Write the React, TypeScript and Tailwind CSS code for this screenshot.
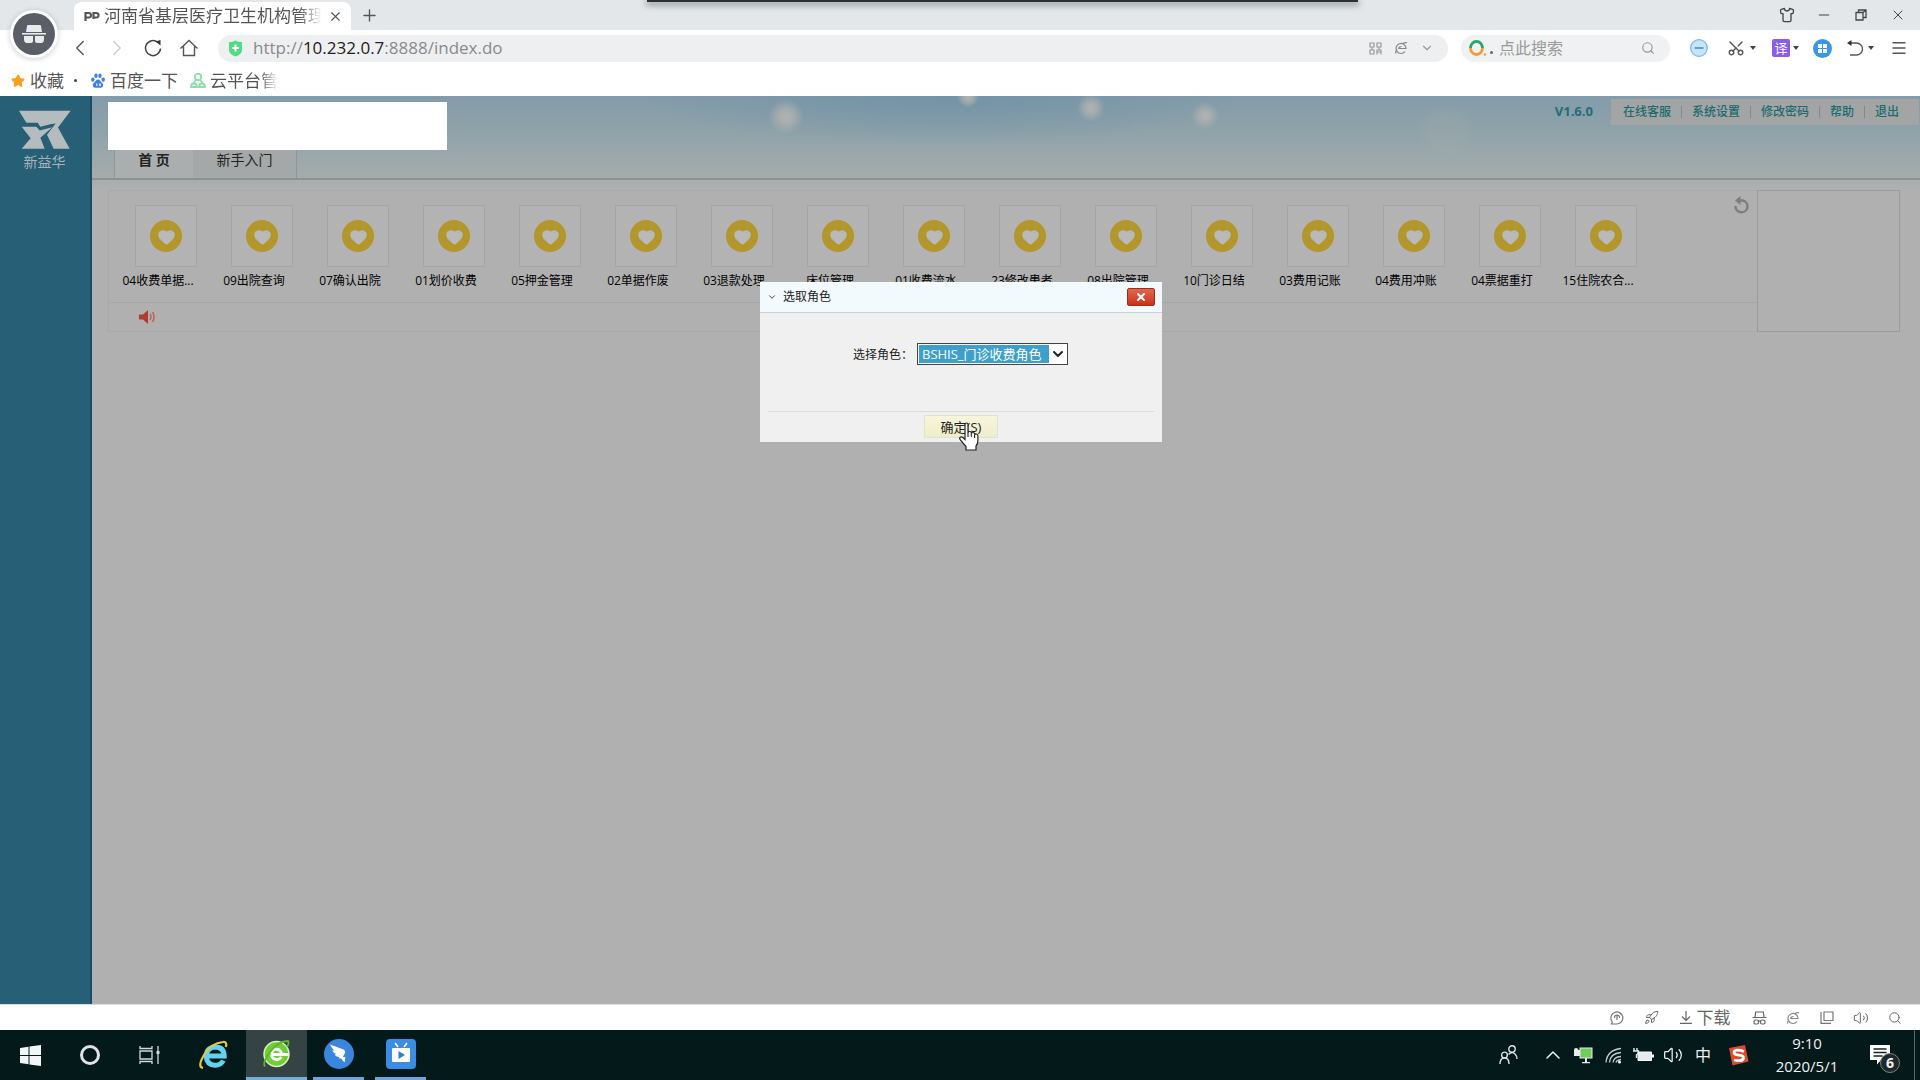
import React from 'react';
import {
  ChevronDown,
  ChevronLeft,
  ChevronRight,
  ChevronUp,
  Heart,
  Menu,
  Minus,
  Plus,
  Rocket,
  Scissors,
  Search,
  Shirt,
  Star,
  Volume2,
  X,
} from 'lucide-react';

const shortcuts = [
  '04收费单据...',
  '09出院查询',
  '07确认出院',
  '01划价收费',
  '05押金管理',
  '02单据作废',
  '03退款处理',
  '床位管理',
  '01收费流水',
  '23修改患者',
  '08出院管理',
  '10门诊日结',
  '03费用记账',
  '04费用冲账',
  '04票据重打',
  '15住院农合...',
];

const menuLinks = ['在线客服', '系统设置', '修改密码', '帮助', '退出'];

const Caret = () => (
  <svg className="w-[6px] h-[4px]" viewBox="0 0 6 4">
    <path d="M0 0h6L3 4z" fill="#444" />
  </svg>
);

const Incognito = ({ className }: { className?: string }) => (
  <svg className={className} viewBox="0 0 24 20" fill="currentColor">
    <path d="M6 1h12q1 0 1 1l1 6H4l1-6q0-1 1-1z" />
    <path d="M0 9h24v1.6H0z" />
    <path d="M2 12h9v5q0 2-2 2H5q-3 0-3-4zM13 12h9v3q0 4-3 4h-4q-2 0-2-2z" />
  </svg>
);

const IncognitoLine = () => (
  <svg className="w-[15px] h-[14px]" viewBox="0 0 15 14" fill="none" stroke="#666" strokeWidth="1.2">
    <path d="M3 6l.7-5h7.6l.7 5M0.5 6.5h14" />
    <rect x="2" y="9" width="4.5" height="4" rx="1.5" />
    <rect x="8.5" y="9" width="4.5" height="4" rx="1.5" />
    <path d="M6.5 10h2" />
  </svg>
);

const Paw = () => (
  <svg className="w-[14px] h-[15px]" viewBox="0 0 14 15" fill="#3d7ff0">
    <ellipse cx="1.8" cy="6.6" rx="1.7" ry="2.2" />
    <ellipse cx="5" cy="2.7" rx="1.7" ry="2.3" />
    <ellipse cx="9" cy="2.7" rx="1.7" ry="2.3" />
    <ellipse cx="12.2" cy="6.6" rx="1.7" ry="2.2" />
    <path d="M7 6.5c2 0 2.5 2 4 3.3 2.2 2 1 5-1.2 5H4.2c-2.3 0-3.4-3-1.2-5C4.5 8.5 5 6.5 7 6.5z" />
    <path d="M5 10.5h1.5V13H5zM8 10.5h2V13H8z" fill="#cfe0ff" />
  </svg>
);

const CloudNodes = () => (
  <svg className="w-[16px] h-[15px]" viewBox="0 0 16 15" fill="none" stroke="#8be0aa" strokeWidth="1.8">
    <circle cx="8" cy="4" r="3.2" />
    <path d="M6 7L3.5 10M10 7l2.5 3" />
    <path d="M1 14q0-3.5 3-3.500T7 14zM9 14q0-3.500 3-3.500t3 3.500z" />
  </svg>
);

const Shield = () => (
  <svg className="w-[15px] h-[17px]" viewBox="0 0 15 17">
    <path d="M1 2Q5 2.200 7.500.5 10 2.200 14 2v8q0 4-6.500 6.500Q1 14 1 10z" fill="#4fdc85" />
    <path d="M7.5 4.500v7M4 8h7" stroke="#fff" strokeWidth="2" />
  </svg>
);

const Reload = () => (
  <svg className="w-[18px] h-[18px]" viewBox="0 0 18 18" fill="none" stroke="#444" strokeWidth="1.5">
    <path d="M16.500 9.500A7.500 7.500 0 1 1 14 3.500" />
    <path d="M11.500 2.500l5-1.500v5.500z" fill="#333" stroke="none" />
  </svg>
);

const HomeIcon = () => (
  <svg className="w-[18px] h-[18px]" viewBox="0 0 18 18" fill="none" stroke="#555" strokeWidth="1.4">
    <path d="M.5 9.500L9 1.500l8.500 8M3.500 7.500v9h11v-9" />
  </svg>
);

const Undo = () => (
  <svg className="w-[16px] h-[18px]" viewBox="0 0 16 18" fill="none" stroke="#555" strokeWidth="1.3">
    <path d="M3 4h6.500a6 6 0 0 1 0 12H3" />
    <path d="M0 4l4.500-3v6z" fill="#333" stroke="none" />
  </svg>
);

const QrIcon = () => (
  <svg className="w-[13px] h-[13px]" viewBox="0 0 13 13" fill="none" stroke="#999" strokeWidth="1.2">
    <path d="M1 1h4v4H1zM8 1h4v4H8zM1 8h4v4H1zM8 12.500V8h4v4.500M8 10h4M3 5v3M10 5v3" />
  </svg>
);

const BrowserE = () => (
  <svg className="w-[14px] h-[14px]" viewBox="0 0 14 14" fill="none" stroke="#888" strokeWidth="1.2">
    <path d="M4.500 7.500h7.500A5 5 0 1 0 11 10.500" />
    <path d="M4.500 7.500q.5-2 3-2M2 12.500q-1-1.500 1-4M9 2.500q3-1.500 4-.5" />
  </svg>
);

const CompanyLogo = () => (
  <svg className="w-[52px] h-[39px]" viewBox="0 0 156 116" fill="#b5bcc0">
    <path d="M0 2h155l-38 50 35 64h-48L84 74l26-34-16 2-30 8-8-12H22z" />
    <path d="M8 50h44l10 11 38-10-36 32 13 33H8l27-32z" />
  </svg>
);

const Refresh = () => (
  <svg className="w-[18px] h-[18px]" viewBox="0 0 18 18" fill="none" stroke="#7d7d7d" strokeWidth="2.4">
    <path d="M7 4.500h3a6 6 0 1 1-7.500 5.500" />
    <path d="M7.500 0v9L2 4.500z" fill="#7d7d7d" stroke="none" />
  </svg>
);

const Pointer = () => (
  <svg className="w-[22px] h-[29px]" viewBox="0 0 22 29">
    <path
      d="M7 2.500Q7 1 8.500 1T10 2.500V11q0-1.500 1.700-1.500T13.300 11v.8q.2-1.300 1.700-1.300t1.600 1.500v.8q.3-1 1.700-.8t1.600 1.800v5q0 3-1.900 5.200V28H8v-3.500L2.200 17.700q-1.200-1.600 0-2.500t2.800.3l2 2z"
      fill="#fff"
      stroke="#222"
      strokeWidth="1.2"
    />
    <path d="M10 11v4M13.300 12v3M16.600 13v3" stroke="#222" strokeWidth="1.1" />
  </svg>
);

const WindowsLogo = () => (
  <svg className="w-[21px] h-[21px]" viewBox="0 0 21 21" fill="#f2f5f5">
    <path d="M0 3l8.500-1.200V10H0zM9.500 1.600L21 0v10H9.500zM0 11h8.500v8.200L0 18zM9.500 11H21v10L9.500 19.400z" />
  </svg>
);

const TaskView = () => (
  <svg className="w-[22px] h-[20px]" viewBox="0 0 22 20" fill="none" stroke="#d5dada" strokeWidth="1.3">
    <path d="M1 6h12v8H1zM1 1v2.500h12V1M1 19v-2.500h12V19M19 1v18" />
    <path d="M17.500 6h3v3h-3z" fill="#d5dada" stroke="none" />
  </svg>
);

const InternetExplorer = () => (
  <svg className="w-[30px] h-[30px]" viewBox="0 0 30 30" fill="none">
    <path d="M8 16h18.200Q26 7 17.200 7 8.500 7.500 8.200 16.200 8.700 25 17 25.300q6-.2 8.300-4.800" stroke="#62d2ee" strokeWidth="5" />
    <path d="M5 28Q-1 27 6 15T25 2q4.500-.5 2.800 5" stroke="#e6c53f" strokeWidth="2.2" />
  </svg>
);

const Browser360 = () => (
  <svg className="w-[29px] h-[29px]" viewBox="0 0 29 29" fill="none">
    <circle cx="14.500" cy="15" r="12.500" fill="#6fce35" stroke="#d9f2c4" strokeWidth="1.5" />
    <path d="M9 15.500h17.500M9.500 15q.5-4.500 5-4.800 4.500.3 5 4.800M9.500 16q.7 4.300 5.200 4.500 3 0 4.600-2.500" stroke="#fff" strokeWidth="2.800" />
    <path d="M3 27.500Q0 24 8 13T26 2q1.500 1.500-1 6" stroke="#5bb82a" strokeWidth="1.800" />
  </svg>
);

const DingTalk = () => (
  <svg className="w-[30px] h-[30px]" viewBox="0 0 30 30">
    <circle cx="15" cy="15" r="15" fill="#3a86de" />
    <path d="M6 5.500q7 2.500 13.500 5 2.500 1.300 1.300 4l-2 3.500h2.700l-1 5.500-3.500-4h-2l.3-1.600q-3.500.3-4.700-2.400l2-.6q-3.500-.8-4.500-3.700l2.500.5Q7.500 9 6 5.500z" fill="#fff" />
  </svg>
);

const VideoApp = () => (
  <svg className="w-[30px] h-[30px]" viewBox="0 0 30 30">
    <rect width="30" height="30" rx="4" fill="#3a8ce4" />
    <path d="M9 4l3 4M21 4l-3 4" stroke="#fff" strokeWidth="1.6" />
    <rect x="6" y="9" width="18" height="14" rx="1" fill="#fff" />
    <path d="M12.500 12l6.500 4-6.500 4z" fill="#2f7fd8" />
  </svg>
);

const People = () => (
  <svg className="w-[19px] h-[20px]" viewBox="0 0 19 20" fill="none" stroke="#dfe5e5" strokeWidth="1.4">
    <circle cx="13" cy="4" r="3.2" />
    <path d="M9.500 9.500q3.500-3.500 6.500-.5 2 2 2 5" />
    <circle cx="5.500" cy="10" r="2.9" />
    <path d="M1 19q0-6 4.500-6t4.500 6" />
  </svg>
);

const Network = () => (
  <svg className="w-[20px] h-[18px]" viewBox="0 0 20 18">
    <rect x="7" y="2" width="12" height="10" fill="#6fce5a" stroke="#e6ecec" strokeWidth="1" />
    <path d="M12 12h2v4h3v1.300H9V16h3z" fill="#e6ecec" />
    <path d="M1 4q0-2 2-2t2.500 2H7v6H1z" fill="#e6ecec" />
  </svg>
);

const Wifi = () => (
  <svg className="w-[17px] h-[17px]" viewBox="0 0 17 17" fill="none" stroke="#c3cccc" strokeWidth="1.3">
    <path d="M1 15.500Q2 3 16 1.500M4.500 15.500Q5 6.500 16 5.500M8 15.500q.5-5.500 8-6M11 15.500q.5-2.500 5-3" />
    <circle cx="14.500" cy="15" r="1.5" fill="#fff" stroke="none" />
  </svg>
);

const Battery = () => (
  <svg className="w-[21px] h-[14px]" viewBox="0 0 21 14">
    <path d="M5 4h13.500v8.500H5z" fill="#e6ecec" stroke="#f5f8f8" />
    <path d="M19 6.500h2v3h-2z" fill="#f5f8f8" />
    <path d="M1 0v3M4 0v3M0 3h5.500v2L3.500 7v3" stroke="#e6ecec" strokeWidth="1.4" fill="none" />
  </svg>
);

const Sogou = () => (
  <svg className="w-[21px] h-[21px]" viewBox="0 0 21 21" fill="none">
    <path d="M1 3l16-3 3.500 16.500-16 4z" fill="#dd4a2c" />
    <path d="M16 6.500Q7 3.500 6 7.300q0 2.500 5 2.900t4.500 3.200Q14 17 6 15" stroke="#fff" strokeWidth="2.8" />
  </svg>
);

const Notifications = () => (
  <div className="relative w-[20px] h-[20px]">
    <svg className="w-[20px] h-[20px]" viewBox="0 0 20 20">
      <path d="M0 0h20v15h-9l-4 4.500V15H0z" fill="#fff" />
      <path d="M3.500 4h13M3.500 7.500h13M3.500 11h9" stroke="#12201f" strokeWidth="1.3" />
    </svg>
    <span className="absolute left-[10px] top-[8px] flex w-[20px] h-[20px] items-center justify-center rounded-full border border-[#7c8484] bg-[#20292a] text-[14px] leading-none font-bold">
      6
    </span>
  </div>
);

const BrowserChrome = () => (
  <header className="relative h-24 shrink-0 bg-white text-[17px] text-[#555]">
    {/* Edge of the recorder bar hidden above the screen */}
    <div className="absolute top-0 left-[647px] w-[711px] h-[2px] bg-[#2c3032] shadow-[0_2px_6px_1px_rgba(60,70,72,0.6)]"></div>

    {/* Title bar */}
    <div className="flex h-[30px] items-end bg-[#e4e7e9] pl-[74px]">
      <div className="flex w-[277px] h-[28px] items-center rounded-t-lg bg-white pl-[10px]">
        <svg className="w-[16px] h-[11px] shrink-0" viewBox="0 0 16 11" fill="none" stroke="#555" strokeWidth="2.2">
          <path d="M1.500 10V2h3q2.500 0 2.500 2.300T4.500 6.500h-3M9.500 8V2H12q2.500 0 2.500 2.300T12 6.500H9.500" />
        </svg>
        <span className="ml-1 w-[222px] shrink-0 whitespace-nowrap [mask-image:linear-gradient(to_right,#000_88%,transparent_98%)]">
          河南省基层医疗卫生机构管理
        </span>
        <button aria-label="关闭标签页" className="ml-[2px]">
          <X className="w-[15px] h-[15px]" strokeWidth={1.8} />
        </button>
      </div>
      <button aria-label="新标签页" className="ml-[9px] mb-[5px]">
        <Plus className="w-[19px] h-[19px]" strokeWidth={1.7} />
      </button>
      <div className="ml-auto flex h-full items-center gap-[21px] pr-[14px] text-[#444]">
        <button aria-label="皮肤"><Shirt className="w-[16px] h-[16px]" strokeWidth={2} /></button>
        <button aria-label="最小化"><Minus className="w-[16px] h-[16px]" strokeWidth={1.7} /></button>
        <button aria-label="还原">
          <svg className="w-[16px] h-[14px]" viewBox="0 0 16 14" fill="none" stroke="#444" strokeWidth="1.3">
            <path d="M3 4.500h7v7.500H3zM5.500 4.500V2h7.500v7.500h-3M10 4.500L13 2" />
          </svg>
        </button>
        <button aria-label="关闭"><X className="w-[16px] h-[16px]" strokeWidth={1.5} /></button>
      </div>
    </div>

    {/* Address bar */}
    <div className="flex h-[36px] items-center pl-[61px] pr-[12px]">
      <button aria-label="后退" className="flex w-[37px] justify-center"><ChevronLeft className="w-[26px] h-[26px]" strokeWidth={1.3} /></button>
      <button aria-label="前进" className="flex w-[37px] justify-center text-[#ccc]"><ChevronRight className="w-[26px] h-[26px]" strokeWidth={1.2} /></button>
      <button aria-label="刷新" className="flex w-[35px] justify-center"><Reload /></button>
      <button aria-label="主页" className="flex w-[37px] justify-center"><HomeIcon /></button>
      <div className="ml-[11px] flex h-[27px] flex-1 items-center rounded-full bg-[#eeeff1] pl-[10px] pr-[14px] text-[#999]">
        <Shield />
        <div role="textbox" aria-label="地址" className="ml-[10px] flex-1 text-[17px] leading-[26px] text-[#8a8a8a]">
          http://<span className="text-[#222]">10.232.0.7</span>:8888/index.do
        </div>
        <div className="flex items-center gap-[12px]">
          <QrIcon />
          <BrowserE />
          <ChevronDown className="w-[14px] h-[14px]" strokeWidth={2} />
        </div>
      </div>
      <div className="ml-[13px] flex w-[209px] h-[27px] items-center rounded-full bg-[#f0f1f2] px-2">
        <svg className="w-[18px] h-[18px] shrink-0" viewBox="0 0 18 18" fill="none" strokeWidth="2.8">
          <path d="M1.500 9a6 6.500 0 0 1 12 0" stroke="#27a56b" />
          <path d="M13.500 9a6 6.500 0 0 1-12 0" stroke="#f29a38" />
          <circle cx="16" cy="15.500" r="1.3" fill="#f29a38" />
        </svg>
        <span className="ml-[3px] mt-2 w-[3px] h-[3px] shrink-0 rounded-full bg-[#666]"></span>
        <input
          aria-label="搜索"
          placeholder="点此搜索"
          className="ml-[6px] w-0 flex-1 bg-transparent text-[16px] outline-none placeholder:text-[#999]"
        />
        <Search className="mr-[7px] w-[14px] h-[14px] text-[#999]" strokeWidth={2} />
      </div>
      <button aria-label="广告拦截" className="ml-[20px]">
        <svg className="w-[18px] h-[18px]" viewBox="0 0 18 18">
          <circle cx="9" cy="9" r="8.300" fill="#c9e4fb" stroke="#79b8ee" strokeWidth="1.3" />
          <path d="M4.500 9h9" stroke="#4a9ce4" strokeWidth="1.8" />
        </svg>
      </button>
      <button aria-label="截图" className="ml-[19px] flex items-center gap-[5px]">
        <Scissors className="w-[18px] h-[18px] -rotate-90" strokeWidth={1.9} />
        <Caret />
      </button>
      <button aria-label="翻译" className="ml-[16px] flex items-center gap-[3px]">
        <span className="flex w-[18px] h-[18px] items-center justify-center rounded-xs bg-[#8b5cf0] text-[13px] leading-none text-white">译</span>
        <Caret />
      </button>
      <button aria-label="扩展" className="ml-[14px]">
        <svg className="w-[19px] h-[19px]" viewBox="0 0 19 19">
          <circle cx="9.500" cy="9.500" r="9.500" fill="#3798ea" />
          <path d="M5 5h4v4H5zM10 5h4v4h-4zM5 10h4v4H5zM10 10h4v4h-4z" fill="#fff" />
        </svg>
      </button>
      <button aria-label="恢复" className="ml-[15px] flex items-center gap-[5px]">
        <Undo />
        <Caret />
      </button>
      <button aria-label="菜单" className="ml-[16px]"><Menu className="w-[18px] h-[22px]" strokeWidth={1.8} /></button>
    </div>

    {/* Bookmarks */}
    <nav className="flex h-[29px] items-center pl-[11px]">
      <Star className="w-[14px] h-[14px] fill-[#f5a01e] text-[#f5a01e]" />
      <a href="#" className="ml-[5px]">收藏</a>
      <span className="ml-[10px] w-[3px] h-[3px] rounded-full bg-[#444]"></span>
      <span className="ml-[14px]"><Paw /></span>
      <a href="#" className="ml-[5px]">百度一下</a>
      <span className="ml-[12px]"><CloudNodes /></span>
      <a href="#" className="ml-1 [mask-image:linear-gradient(to_right,#000_72%,transparent)]">云平台管</a>
    </nav>

    <div className="absolute top-[13px] left-[13px] flex w-[42px] h-[42px] items-center justify-center rounded-full bg-[#5b5e66] text-[#e9ebed] ring-3 ring-white shadow-[0_1px_5px_4px_rgba(0,0,0,0.15)]">
      <Incognito className="w-[24px] h-[20px]" />
    </div>
  </header>
);

const Sparkle = ({ x, y, size }: { x: number; y: number; size: number }) => (
  <span
    className="absolute -translate-x-1/2 -translate-y-1/2 bg-[radial-gradient(closest-side,#b9b6b1,#a9aeaf_40%,transparent)] opacity-90"
    style={{ left: x, top: y, width: size, height: size }}
  ></span>
);

const AppHeader = () => (
  <div className="relative flex h-[84px] justify-between overflow-hidden border-b-2 border-[#8c9192] bg-[linear-gradient(#839baa,#8ea2a9_40%,#9aa7ac_70%,#a5aca9)] text-[12px]">
    <div className="absolute inset-0 bg-[radial-gradient(ellipse_300px_50px_at_850px_0px,#6b8fa5,transparent)] opacity-70"></div>
    <Sparkle x={694} y={21} size={36} />
    <Sparkle x={876} y={1} size={22} />
    <Sparkle x={999} y={12} size={28} />
    <Sparkle x={1113} y={20} size={28} />
    <div className="absolute left-[1330px] top-[14px] w-[48px] h-[42px] rounded-full bg-[#a5adac] opacity-25 blur-xs"></div>

    <div className="relative pl-4 pt-[6px]">
      <div className="w-[339px] h-[48px] bg-white"></div>
      <div role="tablist" className="ml-[6px] flex h-[28px] w-[183px] border-x border-[#8f9696] leading-[20px] text-[#222]">
        <button role="tab" aria-selected="true" className="w-[78px] bg-[#abaeae] pb-2 text-[14px] font-bold">首 页</button>
        <button role="tab" aria-selected="false" className="flex-1 bg-[#a5a8a8] pb-2 text-[14px]">新手入门</button>
      </div>
    </div>

    <div className="relative mt-[3px] mr-[1px] flex h-[26px] items-center">
      <span className="mr-[18px] text-[13px] font-bold text-[#1f6f78]">V1.6.0</span>
      <nav className="flex h-full items-center bg-[#a3a5a5] pl-[12px] pr-[20px] font-medium text-[#1c6b70]">
        {menuLinks.map((link, i) => (
          <React.Fragment key={link}>
            {i > 0 && <span className="mx-[10px] w-px h-[12px] bg-[#858989]"></span>}
            <a href="#">{link}</a>
          </React.Fragment>
        ))}
      </nav>
    </div>
  </div>
);

const Shortcuts = () => (
  <section className="flex h-[142px] pl-[16px] pr-[20px]">
    <div className="flex flex-1 flex-col border border-r-0 border-[#a8a9a9]">
      <div className="relative flex h-[112px] overflow-hidden border-b border-[#a5a7a7] pl-[1px] pt-[14px]">
        {shortcuts.map((label, i) => (
          <a href="#" key={i} className="block w-24 shrink-0 text-[12px] text-black">
            <span className="ml-[25px] flex w-[62px] h-[62px] items-center justify-center border border-[#a3a4a4] bg-[#b3b3b3]">
              <span className="flex w-8 h-8 items-center justify-center rounded-full bg-[#b2982c]">
                <Heart className="mt-[1px] w-[19px] h-[18px] fill-[#b9b9b8] text-[#b9b9b8]" />
              </span>
            </span>
            <span className="mt-[5px] block whitespace-nowrap text-center leading-[18px]">{label}</span>
          </a>
        ))}
        <button aria-label="刷新" className="absolute right-[6px] top-[5px]"><Refresh /></button>
      </div>
      <div className="flex flex-1 items-center pl-[30px]">
        <svg className="w-[16px] h-[14px]" viewBox="0 0 16 14" fill="none" stroke="#b5685c" strokeWidth="1.5">
          <path d="M0 4.500h4L9 0v14L4 9.500H0z" fill="#b03c2e" stroke="none" />
          <path d="M11 4q2 3 0 6M13.500 2q3 5 0 10" />
        </svg>
      </div>
    </div>
    <div className="w-[143px] border border-[#9b9b9b]"></div>
  </section>
);

const RoleDialog = () => (
  <div role="dialog" aria-label="选取角色" className="absolute left-[760px] top-[282px] w-[402px] bg-[#f0f0f0] text-[12px] text-[#222]">
    <div className="flex h-[31px] items-center border-b border-[#c5d3d8] bg-[#f3fafd] pl-[7px] pr-[7px]">
      <ChevronDown className="w-[10px] h-[10px]" strokeWidth={2} />
      <h2 className="ml-[6px]">选取角色</h2>
      <button aria-label="关闭" className="ml-auto flex w-[28px] h-[18px] items-center justify-center rounded-xs border border-[#9c2f1c] bg-gradient-to-b from-[#e0674e] to-[#c93116] text-white">
        <X className="w-[12px] h-[12px]" strokeWidth={4} />
      </button>
    </div>
    <div className="flex h-[98px] items-start pl-[93px] pt-[30px]">
      <label htmlFor="role" className="w-[64px] shrink-0 whitespace-nowrap leading-[24px]">选择角色：</label>
      <div className="relative w-[151px] h-[22px] border border-[#444] bg-white p-[1px]">
        <select id="role" className="block h-full w-full appearance-none bg-[#3d9fcb] pl-[3px] text-[13px] leading-[18px] text-white outline-none">
          <option>BSHIS_门诊收费角色</option>
        </select>
        <span className="pointer-events-none absolute inset-y-0 right-0 flex w-[18px] items-center justify-center bg-white text-[#222]">
          <ChevronDown className="w-[16px] h-[16px]" strokeWidth={3} />
        </span>
      </div>
    </div>
    <div className="relative mx-2 flex h-[31px] justify-center border-t border-[#dcdcdc] pt-[3px]">
      <button className="w-[74px] h-[23px] border border-[#e3e2cc] bg-gradient-to-b from-[#f7f6dc] to-[#eeedcb] text-[13px] leading-[20px]">确定(S)</button>
      <span className="pointer-events-none absolute left-[190px] top-[10px]"><Pointer /></span>
    </div>
  </div>
);

const StatusBar = () => (
  <div className="flex h-[26px] shrink-0 items-center justify-end border-t border-[#ddd] bg-white pr-2 text-[17px] text-[#666]">
    <button aria-label="医生" className="flex w-[34px] justify-center">
      <svg className="w-[14px] h-[14px]" viewBox="0 0 14 14" fill="none" stroke="#777" strokeWidth="1.2">
        <path d="M2 10.500A6 6 0 1 1 7 13H1.500l1-2.500M7 4v5M4.500 7q0-3 2.500-3t2.500 3" />
      </svg>
    </button>
    <button aria-label="加速" className="flex w-[34px] justify-center"><Rocket className="w-[15px] h-[15px]" strokeWidth={1.6} /></button>
    <button className="flex w-[74px] items-center justify-center gap-[5px]">
      <svg className="w-[12px] h-[13px]" viewBox="0 0 12 13" fill="none" stroke="#666" strokeWidth="1.2">
        <path d="M6 0v9M2 5.500L6 9.500l4-4M0 12.300h12" />
      </svg>
      下载
    </button>
    <button aria-label="无痕" className="flex w-[34px] justify-center"><IncognitoLine /></button>
    <button aria-label="内核" className="flex w-[34px] justify-center"><BrowserE /></button>
    <button aria-label="分屏" className="flex w-[34px] justify-center">
      <svg className="w-[14px] h-[13px]" viewBox="0 0 14 13" fill="none" stroke="#777" strokeWidth="1.2">
        <path d="M4 1h9v8.500H4zM1 1v11.300h10" />
      </svg>
    </button>
    <button aria-label="声音" className="flex w-[34px] justify-center"><Volume2 className="w-[16px] h-[16px]" strokeWidth={1.5} /></button>
    <button aria-label="查找" className="flex w-[34px] justify-center"><Search className="w-[14px] h-[14px]" strokeWidth={1.7} /></button>
  </div>
);

const Taskbar = () => (
  <footer className="flex h-[50px] shrink-0 items-stretch bg-[#04191a] text-[#eef2f2]">
    <button aria-label="开始" className="flex w-[60px] items-center justify-center"><WindowsLogo /></button>
    <button aria-label="Cortana" className="flex w-[60px] items-center justify-center">
      <span className="w-[20px] h-[20px] rounded-full border-[3px] border-[#dfe3e3]"></span>
    </button>
    <button aria-label="任务视图" className="flex w-[60px] items-center justify-center"><TaskView /></button>
    <button aria-label="Internet Explorer" className="flex w-[66px] items-center justify-center"><InternetExplorer /></button>
    <button aria-label="360浏览器" className="flex w-[61px] items-center justify-center border-b-3 border-[#6fb1dc] bg-[#364344]"><Browser360 /></button>
    <button aria-label="钉钉" className="ml-[6px] flex w-[51px] items-center justify-center border-b-3 border-[#6fa5dc]"><DingTalk /></button>
    <button aria-label="视频" className="ml-[11px] flex w-[51px] items-center justify-center border-b-3 border-[#6fa5dc]"><VideoApp /></button>

    <div className="ml-auto flex items-center">
      <span className="flex w-[60px] justify-center"><People /></span>
      <span className="flex w-[30px] justify-center"><ChevronUp className="w-[24px] h-[24px]" strokeWidth={1.5} /></span>
      <span className="flex w-[30px] justify-center"><Network /></span>
      <span className="flex w-[30px] justify-center"><Wifi /></span>
      <span className="flex w-[30px] justify-center"><Battery /></span>
      <span className="flex w-[30px] justify-center"><Volume2 className="w-[20px] h-[20px]" strokeWidth={1.5} /></span>
      <span className="flex w-[30px] justify-center text-[16px]">中</span>
      <span className="flex w-[40px] justify-center"><Sogou /></span>
      <div className="w-[98px] text-center text-[15px] leading-[23px]">
        <div>9:10</div>
        <div>2020/5/1</div>
      </div>
      <button aria-label="通知" className="flex w-[48px] justify-center"><Notifications /></button>
      <span className="ml-[10px] w-[6px] h-[50px] border-l border-[#5b6868]"></span>
    </div>
  </footer>
);

const App = () => {
  return (
    <div className="relative flex h-screen flex-col overflow-hidden bg-white font-['Open_Sans','Noto_Sans_CJK_SC',sans-serif]">
      <BrowserChrome />
      <div className="flex min-h-0 flex-1">
        <aside className="flex w-[92px] shrink-0 flex-col items-center border-r-2 border-[#1f4a63] bg-[#275f77] pt-[14px]">
          <CompanyLogo />
          <span className="mt-[3px] pr-px text-[14px] leading-[20px] text-[#a5b4bb]">新益华</span>
        </aside>
        <main className="min-w-0 flex-1 bg-[#b0b0b0]">
          <AppHeader />
          <div className="h-[10px] bg-gradient-to-b from-[#a6aeae] to-[#b0b0b0]"></div>
          <Shortcuts />
        </main>
      </div>
      <StatusBar />
      <Taskbar />
      <RoleDialog />
    </div>
  );
};

export default App;
